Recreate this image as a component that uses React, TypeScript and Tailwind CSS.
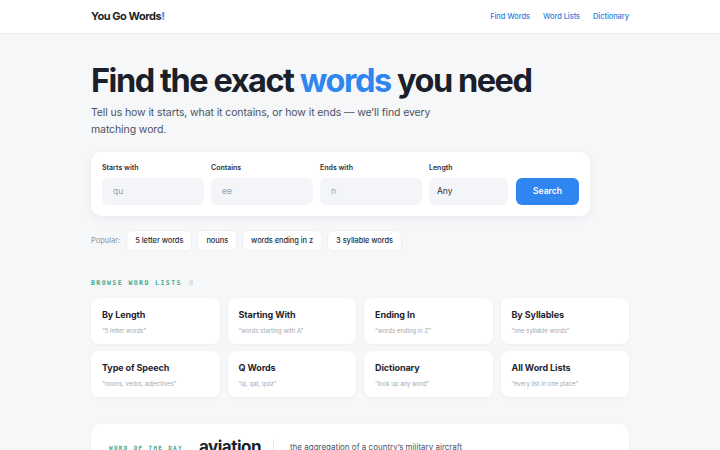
const popular = ["5 letter words", "nouns", "words ending in z", "3 syllable words"];

const lists = [
  { title: "By Length", hint: "“5 letter words”" },
  { title: "Starting With", hint: "“words starting with A”" },
  { title: "Ending In", hint: "“words ending in Z”" },
  { title: "By Syllables", hint: "“one syllable words”" },
  { title: "Type of Speech", hint: "“nouns, verbs, adjectives”" },
  { title: "Q Words", hint: "“qi, qat, quiz”" },
  { title: "Dictionary", hint: "“look up any word”" },
  { title: "All Word Lists", hint: "“every list in one place”" },
];

const fields = [
  { label: "Starts with", placeholder: "qu" },
  { label: "Contains", placeholder: "ee" },
  { label: "Ends with", placeholder: "n" },
];

export default function App() {
  return (
    <div className="min-h-screen bg-[#f6f7f9] font-['Inter',sans-serif] text-[#1b1f2a]">
      <header className="h-[34px] border-b border-[#eceef2] bg-white">
        <div className="mx-auto flex h-full w-[538px] items-center justify-between">
          <p className="text-[11px] font-bold tracking-[-0.04em]">
            You Go Words<span className="text-[#2f86ee]">!</span>
          </p>
          <nav className="flex gap-[13px] text-[7.5px] font-medium tracking-[-0.01em] text-[#2f7fe0]">
            <span>Find Words</span>
            <span>Word Lists</span>
            <span>Dictionary</span>
          </nav>
        </div>
      </header>

      <main className="mx-auto w-[538px]">
        <h1 className="mt-[27px] text-[32.5px] font-bold leading-[40px] tracking-[-0.045em]">
          Find the exact <span className="text-[#2f86ee]">words</span> you need
        </h1>
        <p className="mt-[3px] w-[350px] text-[10.5px] leading-[17px] tracking-[-0.01em] text-[#4b5263]">
          Tell us how it starts, what it contains, or how it ends — we’ll find every matching word.
        </p>

        <div className="mt-[14px] flex w-[499px] items-end gap-[7px] rounded-[10px] bg-white p-[11px] shadow-[0_2px_10px_rgba(20,30,50,0.06)]">
          {fields.map((f) => (
            <div key={f.label} className="w-[102px]">
              <p className="mb-[4px] text-[7px] font-semibold text-[#2b303b]">{f.label}</p>
              <div className="flex h-[27px] items-center rounded-[6px] bg-[#f3f5f8] px-[11px] text-[8.5px] text-[#9aa1ad]">
                {f.placeholder}
              </div>
            </div>
          ))}
          <div className="w-[79px]">
            <p className="mb-[4px] text-[7px] font-semibold text-[#2b303b]">Length</p>
            <div className="flex h-[27px] items-center rounded-[6px] bg-[#f3f5f8] px-[8px] text-[8.5px] text-[#2b303b]">
              Any
            </div>
          </div>
          <button className="ml-[1px] h-[27px] w-[63px] rounded-[6px] bg-[#2f86f0] text-[8.5px] font-semibold text-white">
            Search
          </button>
        </div>

        <div className="mt-[14px] flex items-center gap-[5px]">
          <span className="mr-[1px] text-[7.5px] text-[#8d94a1]">Popular:</span>
          {popular.map((p) => (
            <span
              key={p}
              className="rounded-[6px] border border-[#eef0f3] bg-white px-[8px] py-[4px] text-[7.5px] font-medium tracking-[-0.01em] text-[#2b303b]"
            >
              {p}
            </span>
          ))}
        </div>

        <p className="mt-[28px] font-['DejaVu_Sans_Mono',monospace] text-[6.5px] font-bold tracking-[0.22em] text-[#3fa88e]">
          BROWSE WORD LISTS <span className="ml-[2px] font-normal text-[#c3c8cf]">8</span>
        </p>

        <div className="mt-[9px] grid grid-cols-4 gap-x-[8px] gap-y-[7px]">
          {lists.map((l) => (
            <div key={l.title} className="h-[46px] rounded-[8px] bg-white px-[11px] pt-[10px] shadow-[0_1px_4px_rgba(20,30,50,0.04)]">
              <p className="text-[9px] font-bold tracking-[-0.01em] text-[#1f2430]">{l.title}</p>
              <p className="mt-[5px] text-[6px] text-[#a3a9b3]">{l.hint}</p>
            </div>
          ))}
        </div>

        <div className="mt-[27px] flex h-[60px] items-start rounded-[10px] bg-white px-[18px] pt-[13px] shadow-[0_1px_4px_rgba(20,30,50,0.04)]">
          <p className="mt-[6px] w-[90px] font-['DejaVu_Sans_Mono',monospace] text-[6px] font-bold tracking-[0.22em] text-[#3fa88e]">
            WORD OF THE DAY
          </p>
          <p className="w-[74px] text-[17px] font-bold leading-[20px] tracking-[-0.03em]">aviation</p>
          <div className="mt-[2px] h-[30px] w-px bg-[#e6e8ec]" />
          <p className="ml-[16px] mt-[4px] text-[8px] text-[#4b5263]">the aggregation of a country’s military aircraft</p>
        </div>
      </main>
    </div>
  );
}
